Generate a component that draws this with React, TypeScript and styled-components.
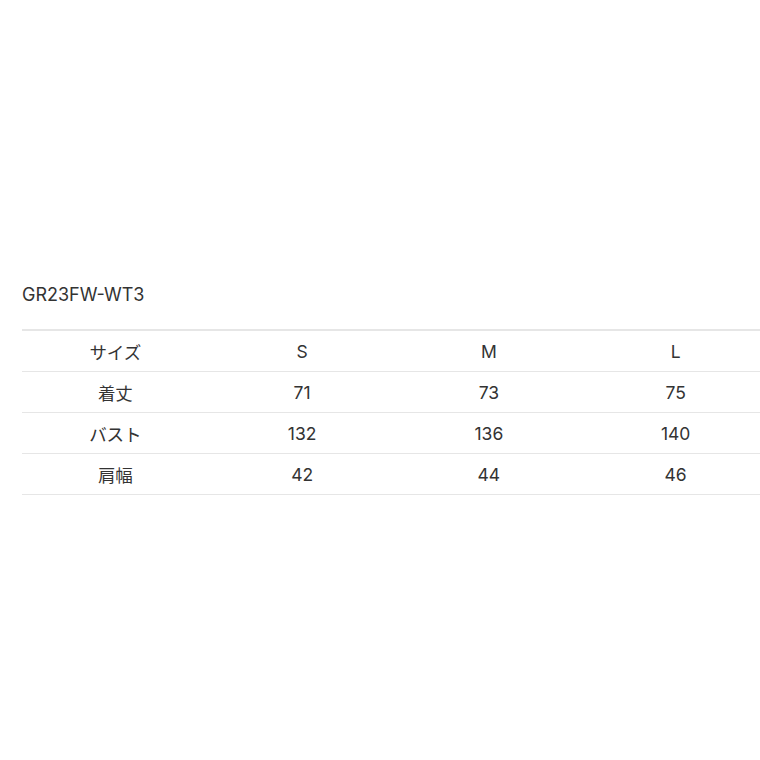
import styled, { createGlobalStyle } from 'styled-components';

const GlobalStyle = createGlobalStyle`
  html, body {
    margin: 0;
    padding: 0;
    background: #ffffff;
    overflow: hidden;
  }
  body {
    font-family: Inter, "Noto Sans CJK JP", sans-serif;
    color: #333333;
  }
`;

const Page = styled.div`
  width: 760px;
  height: 760px;
  padding: 282px 0 0 22px;
  box-sizing: border-box;
`;

const Title = styled.div`
  font-size: 18px;
  line-height: 26px;
  color: #333333;
  margin-bottom: 21px;
`;

const SizeTable = styled.table`
  width: 747px;
  border-collapse: collapse;
  table-layout: fixed;
  border-top: 2px solid #e6e6e6;
`;

const Cell = styled.td`
  height: 40px;
  padding: 0;
  text-align: center;
  font-size: 17.5px;
  color: #333333;
  border-bottom: 1px solid #e6e6e6;
`;

type Row = { label: string; values: string[] };

const rows: Row[] = [
  { label: 'サイズ', values: ['S', 'M', 'L'] },
  { label: '着丈', values: ['71', '73', '75'] },
  { label: 'バスト', values: ['132', '136', '140'] },
  { label: '肩幅', values: ['42', '44', '46'] },
];

const App = () => {
  return (
    <>
      <GlobalStyle />
      <Page>
        <Title>GR23FW-WT3</Title>
        <SizeTable>
          <tbody>
            {rows.map((row) => (
              <tr key={row.label}>
                <Cell>{row.label}</Cell>
                {row.values.map((v) => (
                  <Cell key={v}>{v}</Cell>
                ))}
              </tr>
            ))}
          </tbody>
        </SizeTable>
      </Page>
    </>
  );
};

export default App;
